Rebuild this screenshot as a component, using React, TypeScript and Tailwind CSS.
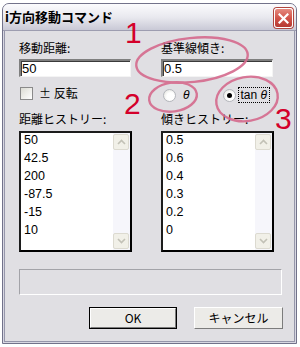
import React from "react";

const distHistory = ["50", "42.5", "200", "-87.5", "-15", "10"];
const slopeHistory = ["0.5", "0.6", "0.4", "0.3", "0.2", "0"];

function TextBox({ value }: { value: string }) {
  return (
    <div className="h-[18px] w-[112px] border-t-2 border-l-2 border-b border-r border-t-[#7f7f7f] border-l-[#7f7f7f] border-b-[#f4f4f4] border-r-[#f4f4f4] bg-white pl-[1px] font-['Liberation_Sans',sans-serif] text-[13px] leading-[15px] shadow-[inset_1px_1px_0_#3a3a3a]">
      {value}
    </div>
  );
}

function ScrollBtn({ up }: { up?: boolean }) {
  return (
    <div className="flex h-[16px] w-[16px] items-center justify-center rounded-[2px] border border-[#dcdad0] bg-[#f1f0e8]">
      <svg width="9" height="6" viewBox="0 0 9 6">
        <path
          d={up ? "M1 5 L4.5 1.5 L8 5" : "M1 1 L4.5 4.5 L8 1"}
          fill="none"
          stroke="#c2c1b6"
          strokeWidth="1.6"
        />
      </svg>
    </div>
  );
}

function ListBox({ items }: { items: string[] }) {
  return (
    <div className="flex h-[121px] w-[113px] border-2 border-t-[#1c1c1c] border-l-[#1c1c1c] border-b-black border-r-black bg-white">
      <div className="flex-1 pl-[3px] font-['Liberation_Sans',sans-serif] text-[12.5px]">
        {items.map((it) => (
          <div key={it} className="h-[18px] leading-[14px]">
            {it}
          </div>
        ))}
      </div>
      <div className="flex w-[17px] flex-col justify-between bg-[#f6f6fb] py-[1px]">
        <ScrollBtn up />
        <ScrollBtn />
      </div>
    </div>
  );
}

function Radio({ checked }: { checked?: boolean }) {
  return (
    <div className="flex h-[13px] w-[13px] items-center justify-center rounded-full border border-[#b4b6bc] bg-[radial-gradient(circle_at_60%_60%,#ffffff_40%,#dcdcd6_100%)]">
      {checked && <div className="h-[5px] w-[5px] rounded-full bg-black" />}
    </div>
  );
}

function Button({ label, isDefault }: { label: string; isDefault?: boolean }) {
  return (
    <div className={isDefault ? "border border-black" : ""}>
      <div
        className={`flex items-center justify-center border border-t-white border-l-white border-b-[#7c7c7c] border-r-[#7c7c7c] bg-[#ecebe8] text-[12px] ${
          isDefault ? "h-[20px] w-[86px]" : "h-[22px] w-[89px]"
        }`}
      >
        {label}
      </div>
    </div>
  );
}

export default function App() {
  return (
    <div className="relative h-[347px] w-[300px] overflow-hidden bg-white pl-[2px] pt-[3px] font-['Noto_Sans_CJK_JP',sans-serif] text-[12px] text-black">
      <div className="flex h-[341px] w-[295px] flex-col overflow-hidden rounded-t-[7px] border border-[#72728a] bg-[#d8d8e2]">
        {/* title bar */}
        <div className="flex h-[27px] items-center justify-between bg-gradient-to-b from-[#fbfbfd] via-[#e9e9ef] to-[#c9c9d6] pl-[2px] pr-[3px] border-b border-[#9d9db0]">
          <span className="text-[13px] font-bold">i方向移動コマンド</span>
          <div className="mt-[2px] flex h-[20px] w-[19px] items-center justify-center rounded-[3px] border border-[#ffffff] bg-gradient-to-b from-[#e58a80] via-[#d2544a] to-[#b53a32] shadow-[0_0_0_1px_#b0463e]">
            <svg width="11" height="11" viewBox="0 0 11 11">
              <path d="M1.5 1.5 L9.5 9.5 M9.5 1.5 L1.5 9.5" stroke="white" strokeWidth="2.2" strokeLinecap="square" />
            </svg>
          </div>
        </div>

        {/* frame */}
        <div className="flex-1 px-[1px] pb-[1px]">
          <div className="h-full border-x border-b border-[#9696aa] bg-[#e0dfe3] pl-[14px] pt-[10px]">
            <div className="flex w-[264px] gap-[29px]">
              {/* left column */}
              <div className="flex w-[113px] flex-col">
                <div className="h-[14px] leading-[14px]">移動距離:</div>
                <div className="mt-[4px]">
                  <TextBox value="50" />
                </div>
                <div className="mt-[9px] flex h-[14px] items-center gap-[6px] pl-[1px]">
                  <div className="h-[13px] w-[13px] border border-[#8a8a8a] bg-[linear-gradient(135deg,#dcdcd4,#ffffff)]" />
                  <span className="leading-[14px]">± 反転</span>
                </div>
                <div className="mt-[12px] h-[14px] leading-[14px]">距離ヒストリー:</div>
                <div className="mt-[5px]">
                  <ListBox items={distHistory} />
                </div>
              </div>

              {/* right column */}
              <div className="flex w-[113px] flex-col">
                <div className="h-[14px] leading-[14px]">基準線傾き:</div>
                <div className="mt-[4px]">
                  <TextBox value="0.5" />
                </div>
                <div className="mt-[10px] flex h-[16px] items-center pl-[2px]">
                  <Radio />
                  <span className="ml-[7px] font-['Liberation_Sans',sans-serif] italic leading-[14px]">θ</span>
                  <div className="ml-[33px]">
                    <Radio checked />
                  </div>
                  <span className="ml-[2px] border border-dotted border-black px-[2px] font-['Liberation_Sans',sans-serif] leading-[14px]">
                    tan <i>θ</i>
                  </span>
                </div>
                <div className="mt-[9px] h-[14px] leading-[14px]">傾きヒストリー:</div>
                <div className="mt-[5px]">
                  <ListBox items={slopeHistory} />
                </div>
              </div>
            </div>

            <div className="mt-[17px] h-[26px] w-[263px] border border-t-[#a3a3a8] border-l-[#a3a3a8] border-b-white border-r-white" />

            <div className="mt-[12px] flex w-[264px] justify-end gap-[17px]">
              <Button label="OK" isDefault />
              <Button label="キャンセル" />
            </div>
          </div>
        </div>
      </div>

      {/* annotations */}
      <svg className="pointer-events-none absolute left-0 top-0" width="300" height="347">
        <g fill="none" stroke="#d56a8d" strokeWidth="2.4" opacity="0.9">
          <ellipse cx="192" cy="60" rx="56" ry="22" transform="rotate(-6 192 60)" />
          <ellipse cx="173" cy="97" rx="24" ry="14.5" transform="rotate(-8 173 97)" />
          <ellipse cx="247" cy="99" rx="31" ry="22" transform="rotate(-10 247 99)" />
        </g>
      </svg>
      <span className="absolute left-[125px] top-[18px] font-['Liberation_Sans',sans-serif] text-[30px] leading-none text-[#d4002a]">1</span>
      <span className="absolute left-[124px] top-[89px] font-['Liberation_Sans',sans-serif] text-[30px] leading-none text-[#d4002a]">2</span>
      <span className="absolute left-[275px] top-[104px] font-['Liberation_Sans',sans-serif] text-[30px] leading-none text-[#d4002a]">3</span>
    </div>
  );
}
